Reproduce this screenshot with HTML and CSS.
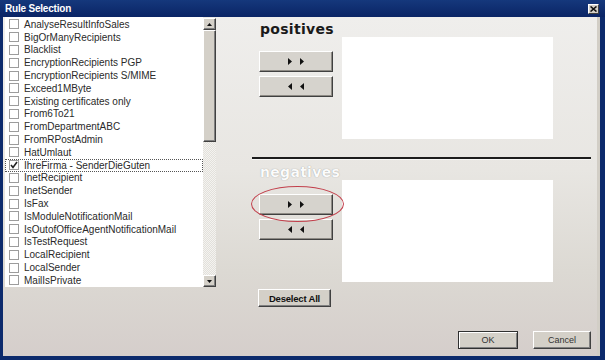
FILE: index.html
```html
<!DOCTYPE html>
<html lang="en">
<head>
  <meta charset="UTF-8" />
  <title>Rule Selection</title>
  <link rel="stylesheet" href="styles.css">
</head>
<body>

<div class="window">
  <!-- title bar -->
  <div class="titlebar">
    <span class="title">Rule Selection</span>
    <button class="close-btn" title="Close">
      <svg width="7" height="6" viewBox="0 0 7 6"><path d="M0.5 0.5 L6.5 5.5 M6.5 0.5 L0.5 5.5" stroke="#111" stroke-width="1.6"/></svg>
    </button>
  </div>

  <div class="client">
    <div class="main">
      <!-- rule list -->
      <div class="rules">
        <ul class="rule-list">
          <li><span class="check"></span>AnalyseResultInfoSales</li>
          <li><span class="check"></span>BigOrManyRecipients</li>
          <li><span class="check"></span>Blacklist</li>
          <li><span class="check"></span>EncryptionRecipients PGP</li>
          <li><span class="check"></span>EncryptionRecipients S/MIME</li>
          <li><span class="check"></span>Exceed1MByte</li>
          <li><span class="check"></span>Existing certificates only</li>
          <li><span class="check"></span>From6To21</li>
          <li><span class="check"></span>FromDepartmentABC</li>
          <li><span class="check"></span>FromRPostAdmin</li>
          <li><span class="check"></span>HatUmlaut</li>
          <li class="focused"><span class="check"><svg width="8" height="8" viewBox="0 0 8 8"><path d="M1 4 L3 6.5 L7 1" fill="none" stroke="#222" stroke-width="1.6"/></svg></span>IhreFirma - SenderDieGuten</li>
          <li><span class="check"></span>InetRecipient</li>
          <li><span class="check"></span>InetSender</li>
          <li><span class="check"></span>IsFax</li>
          <li><span class="check"></span>IsModuleNotificationMail</li>
          <li><span class="check"></span>IsOutofOfficeAgentNotificationMail</li>
          <li><span class="check"></span>IsTestRequest</li>
          <li><span class="check"></span>LocalRecipient</li>
          <li><span class="check"></span>LocalSender</li>
          <li><span class="check"></span>MailIsPrivate</li>
        </ul>
        <div class="scrollbar">
          <div class="scroll-btn">
            <svg width="5" height="3" viewBox="0 0 5 3"><path d="M2.5 0 L5 3 L0 3 Z" fill="#111"/></svg>
          </div>
          <div class="thumb"></div>
          <div class="track"></div>
          <div class="scroll-btn">
            <svg width="5" height="3" viewBox="0 0 5 3"><path d="M0 0 L5 0 L2.5 3 Z" fill="#111"/></svg>
          </div>
        </div>
      </div>

      <!-- positives / negatives -->
      <div class="panel">
        <h3 class="heading">positives</h3>
        <div class="section-row">
          <div class="arrows">
            <button class="arrow-btn">
              <svg width="17" height="7" viewBox="0 0 17 7"><path d="M0 0 L4 3.5 L0 7 Z M12 0 L16 3.5 L12 7 Z" fill="#111"/></svg>
            </button>
            <button class="arrow-btn">
              <svg width="17" height="7" viewBox="0 0 17 7"><path d="M4 0 L0 3.5 L4 7 Z M16 0 L12 3.5 L16 7 Z" fill="#111"/></svg>
            </button>
          </div>
          <div class="target-box"></div>
        </div>

        <div class="separator"></div>

        <h3 class="heading heading-light">negatives</h3>
        <div class="section-row">
          <div class="arrows">
            <div class="ring-wrap">
              <button class="arrow-btn">
                <svg width="17" height="7" viewBox="0 0 17 7"><path d="M0 0 L4 3.5 L0 7 Z M12 0 L16 3.5 L12 7 Z" fill="#111"/></svg>
              </button>
              <span class="ring"></span>
            </div>
            <button class="arrow-btn">
              <svg width="17" height="7" viewBox="0 0 17 7"><path d="M4 0 L0 3.5 L4 7 Z M16 0 L12 3.5 L16 7 Z" fill="#111"/></svg>
            </button>
          </div>
          <div class="target-box"></div>
        </div>

        <button class="win-btn deselect-btn">Deselect All</button>
      </div>
    </div>

    <div class="footer">
      <button class="win-btn dialog-btn default-btn">OK</button>
      <button class="win-btn dialog-btn cancel-btn">Cancel</button>
    </div>
  </div>
</div>

</body>
</html>
```

FILE: styles.css
```css
* {
  box-sizing: border-box;
}
body {
  margin: 0;
  font-family: "Liberation Sans", Arial, sans-serif;
  background: #0c2a6c;
}
.window {
  width: 605px;
  height: 360px;
  background: #0c2a6c;
  display: flex;
  flex-direction: column;
}

/* title bar */
.titlebar {
  height: 17px;
  flex: none;
  display: flex;
  align-items: center;
  justify-content: space-between;
  padding: 0 6px 0 5px;
  background: linear-gradient(#15387c, #0a2465);
}
.title {
  color: #fff;
  font-weight: bold;
  font-size: 10px;
  letter-spacing: -0.2px;
}
.close-btn {
  width: 11px;
  height: 10px;
  padding: 0;
  display: flex;
  align-items: center;
  justify-content: center;
  background: #d4d0c8;
  border: 1px solid;
  border-color: #fff #404040 #404040 #fff;
}

/* client area */
.client {
  flex: 1;
  margin: 0 5px 4px 3px;
  display: flex;
  flex-direction: column;
  border-right: 3px solid #d2cec6;
  background: linear-gradient(#efeeec 0%, #e8e6e2 45%, #dcd9d3 75%, #d5cecb 100%);
}
.main {
  display: flex;
}

/* rule list */
.rules {
  display: flex;
  margin-left: 2px;
  height: 270px;
}
.rule-list {
  width: 198px;
  margin: 0;
  padding: 1px 0 0;
  list-style: none;
  background: #fff;
  overflow: hidden;
}
.rule-list li {
  height: 12.8px;
  display: flex;
  align-items: center;
  padding-left: 4px;
  font-size: 10px;
  color: #2a2a2a;
  white-space: nowrap;
}
.rule-list li.focused {
  outline: 1px dotted #555;
  outline-offset: -1px;
}
.check {
  width: 10px;
  height: 10px;
  flex: none;
  margin-right: 5px;
  border: 1px solid #9c9c9c;
  background: #fff;
  display: flex;
  align-items: center;
  justify-content: center;
}

.scrollbar {
  width: 13px;
  display: flex;
  flex-direction: column;
  padding-top: 1px;
  background: #ecebe8;
}
.scroll-btn, .thumb {
  background: #d4d0c8;
  border: 1px solid;
  border-color: #fff #404040 #404040 #fff;
  box-shadow: inset -1px -1px #808080;
}
.scroll-btn {
  height: 12px;
  display: flex;
  align-items: center;
  justify-content: center;
}
.thumb {
  height: 112px;
}
.track {
  flex: 1;
  background: repeating-conic-gradient(#f4f3f0 0 25%, #e2e0db 0 50%) 0 0 / 2px 2px;
}

/* right panel */
.panel {
  width: 344px;
  margin-left: 31px;
}
.heading {
  margin: 0;
  height: 20px;
  padding-left: 13px;
  font-family: "DejaVu Sans", sans-serif;
  font-size: 14px;
  line-height: 24px;
  letter-spacing: 0.3px;
  color: #1a1a1a;
}
.heading-light {
  color: #fbfbfb;
  text-shadow: 0 0 1px #8a8a8a;
}
.section-row {
  display: flex;
}
.arrows {
  width: 74px;
  margin-left: 12px;
  padding-top: 14px;
  display: flex;
  flex-direction: column;
  gap: 4px;
}
.arrow-btn {
  width: 74px;
  height: 21px;
  padding: 0;
  display: flex;
  align-items: center;
  justify-content: center;
  background: #d6d3cd;
  border: 1px solid;
  border-color: #fff #404040 #404040 #fff;
  box-shadow: inset -1px -1px #8e8b85;
}
.target-box {
  width: 211px;
  height: 102px;
  margin-left: 9px;
  background: #fff;
}
.separator {
  height: 3px;
  margin: 18px 0 0 5px;
  border-top: 2px solid #1c1c1c;
  border-bottom: 1px solid #f8f8f6;
}

.ring-wrap {
  position: relative;
}
.ring {
  position: absolute;
  top: -8px;
  left: -8px;
  right: -11px;
  bottom: -7px;
  border: 1px solid #c2404c;
  border-radius: 50%;
}

/* buttons */
.win-btn {
  padding: 0;
  font-family: "Liberation Sans", Arial, sans-serif;
  color: #222;
  background: #d4d0c8;
  border: 1px solid;
  border-color: #fff #404040 #404040 #fff;
  box-shadow: inset -1px -1px #808080;
}
.deselect-btn {
  width: 73px;
  height: 18px;
  margin: 7px 0 0 11px;
  font-size: 9.5px;
  font-weight: bold;
  letter-spacing: -0.2px;
  color: #111;
}
.footer {
  margin-top: auto;
  display: flex;
  justify-content: flex-end;
  gap: 15px;
  padding: 0 6px 7px 0;
}
.dialog-btn {
  height: 18px;
  font-size: 9px;
  color: #333;
}
.default-btn {
  width: 60px;
  border: 1px solid #303030;
  box-shadow: inset 1px 1px #fff, inset -1px -1px #808080;
}
.cancel-btn {
  width: 58px;
}
```
